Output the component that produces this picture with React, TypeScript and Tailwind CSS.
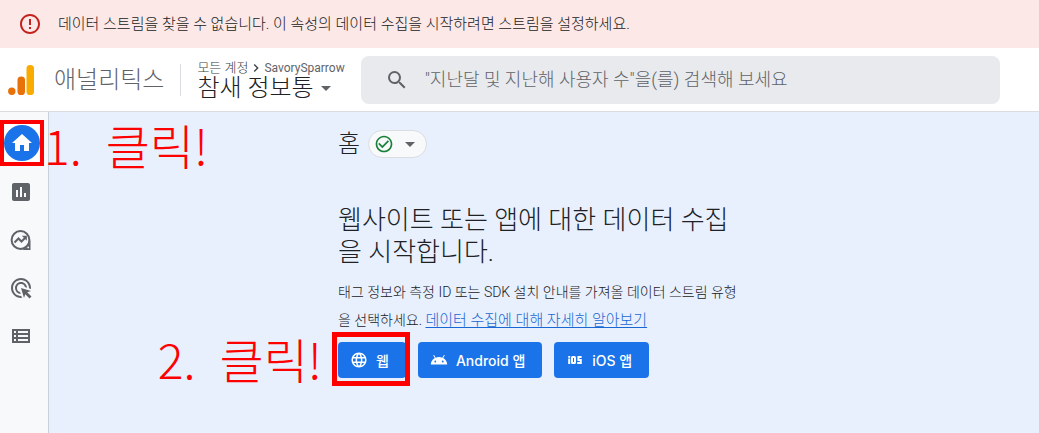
import {
  MdAdsClick,
  MdAndroid,
  MdArrowDropDown,
  MdAssessment,
  MdCheckCircleOutline,
  MdChevronRight,
  MdErrorOutline,
  MdHome,
  MdLanguage,
  MdSearch,
} from "react-icons/md";

function ExploreIcon() {
  return (
    <svg viewBox="0 0 24 24" className="w-6 h-6" fill="none" stroke="currentColor" aria-hidden="true">
      <circle cx="11.5" cy="12" r="8.9" strokeWidth="2" />
      <path d="M21.5 12v9.9h-10c4 0 8-3 10-9.9z" fill="currentColor" stroke="none" />
      <path d="M5.5 14.5l4-4 3 3 4.5-4.5" strokeWidth="2" />
      <path d="M12.8 7.8h5v5z" fill="currentColor" stroke="none" />
      <circle cx="19.2" cy="19.4" r="0.9" fill="#f8f9fa" stroke="none" />
    </svg>
  );
}

function TableIcon() {
  return (
    <svg viewBox="0 0 24 24" className="w-6 h-6" fill="currentColor" aria-hidden="true">
      <path d="M3 5h18v14H3zM5 7v2h2V7zm4 0v2h10V7zM5 11v2h2v-2zm4 0v2h10v-2zM5 15v2h2v-2zm4 0v2h10v-2z" fillRule="evenodd" />
    </svg>
  );
}

function IosIcon() {
  return (
    <svg viewBox="0 0 18 10" className="w-[18px] h-2.5" fill="none" stroke="currentColor" strokeWidth="2" aria-hidden="true">
      <path d="M3.2 3.6V9M3.2 1v1.8" />
      <rect x="6" y="2" width="3" height="6" rx="0.6" />
      <path d="M15.6 2h-3.2v3h2.4v3h-3.6" />
    </svg>
  );
}

function AnalyticsLogo() {
  return (
    <svg viewBox="0 0 26 30" className="w-[26px] h-[30px] shrink-0" aria-hidden="true">
      <rect x="18.5" y="0" width="7.5" height="30" rx="3.6" fill="#f9ab00" />
      <rect x="9.5" y="11.5" width="7.5" height="18.5" rx="3.6" fill="#e8710a" />
      <circle cx="3.8" cy="26.2" r="3.7" fill="#e8710a" />
    </svg>
  );
}

function Callout({ step }: { step: number }) {
  return (
    <p className="flex gap-6 whitespace-nowrap text-[48px] leading-none font-light text-[#ff0000] font-['Noto_Sans_CJK_KR',sans-serif]">
      <span>{step}.</span>
      <span>클릭!</span>
    </p>
  );
}

const navItems = [
  { label: "보고서", icon: <MdAssessment className="w-6 h-6" /> },
  { label: "탐색", icon: <ExploreIcon /> },
  { label: "광고", icon: <MdAdsClick className="w-6 h-6" /> },
  { label: "구성", icon: <TableIcon /> },
];

const buttonClass =
  "flex items-center gap-2 h-9 rounded bg-[#1a73e8] pl-3 pr-[17px] text-[14px] font-medium text-white whitespace-nowrap font-[Inter,'Noto_Sans_CJK_KR',sans-serif]";

export default function App() {
  return (
    <div className="min-h-screen flex flex-col bg-white text-[#202124] font-[Roboto,'Noto_Sans_CJK_KR',sans-serif]">
      {/* Alert */}
      <div className="flex items-center gap-4 h-12 px-[18px] bg-[#fce8e6]">
        <MdErrorOutline className="w-6 h-6 shrink-0 text-[#c5221f]" />
        <p className="text-[15px] font-light">
          데이터 스트림을 찾을 수 없습니다. 이 속성의 데이터 수집을 시작하려면 스트림을 설정하세요.
        </p>
      </div>

      {/* Header */}
      <header className="flex items-center h-16 pl-2 pr-[39px] border-b border-[#dadce0]">
        <AnalyticsLogo />
        <span className="ml-5 text-[24px] font-light text-[#5f6368] whitespace-nowrap">애널리틱스</span>
        <div className="ml-4 h-8 border-l border-[#dadce0]" />
        <div className="ml-4 shrink-0 whitespace-nowrap">
          <div className="flex items-center text-[13px] leading-4 font-light text-[#3c4043]">
            모든 계정
            <MdChevronRight className="w-4 h-4" />
            <span className="text-[12px] font-normal text-[#5f6368]">SavorySparrow</span>
          </div>
          <button type="button" className="flex items-center text-[24px] leading-6 font-light">
            참새 정보통
            <MdArrowDropDown className="w-6 h-6 text-[#5f6368]" />
          </button>
        </div>
        <label className="ml-4 flex flex-1 items-center gap-4 h-12 pl-6 rounded-lg bg-[#e8eaed]">
          <MdSearch className="w-6 h-6 shrink-0 text-[#5f6368]" />
          <input
            type="search"
            aria-label="검색"
            placeholder={'"지난달 및 지난해 사용자 수"을(를) 검색해 보세요'}
            className="flex-1 min-w-0 bg-transparent text-[18px] font-light outline-none placeholder:text-[#5f6368]"
          />
        </label>
      </header>

      <div className="flex flex-1">
        {/* Side navigation */}
        <nav className="flex w-[49px] shrink-0 flex-col gap-3.5 pt-2 border-r border-[#c9d0da] bg-[#f8f9fa] text-[#5f6368]">
          <div className="relative w-11">
            <button type="button" aria-label="홈" className="flex w-11 h-[46px] items-center justify-center border-4 border-[#ff0000] bg-white">
              <span className="flex w-9 h-9 shrink-0 items-center justify-center rounded-full bg-[#1a73e8] text-white">
                <MdHome className="w-6 h-6" />
              </span>
            </button>
            <div className="absolute left-full top-0 z-10">
              <Callout step={1} />
            </div>
          </div>
          <div className="flex flex-col gap-6 pl-[9px]">
            {navItems.map((item) => (
              <button key={item.label} type="button" aria-label={item.label} className="w-6 h-6">
                {item.icon}
              </button>
            ))}
          </div>
        </nav>

        {/* Home */}
        <main className="flex-1 bg-[#e8f0fe]">
          <div className="mx-auto max-w-[412px] pt-[18px]">
            <div className="flex items-center gap-2">
              <h1 className="text-[24px] leading-7 font-light">홈</h1>
              <button type="button" aria-label="데이터 상태" className="flex items-center gap-1 h-7 pl-[5px] pr-1 rounded-full border border-[#dadce0] bg-[#f8f9fa]">
                <MdCheckCircleOutline className="w-5 h-5 text-[#188038]" />
                <MdArrowDropDown className="w-6 h-6 text-[#5f6368]" />
              </button>
            </div>

            <div className="max-w-[402px]">
              <h2 className="mt-[46px] text-[26px] leading-8 font-light">웹사이트 또는 앱에 대한 데이터 수집을 시작합니다.</h2>
              <p className="mt-2.5 text-[14px] leading-7 font-light">
                태그 정보와 측정 ID 또는 SDK 설치 안내를 가져올 데이터 스트림 유형을 선택하세요.{" "}
                <a href="#" className="text-[15px] leading-5 text-[#1967d2] underline underline-offset-2">데이터 수집에 대해 자세히 알아보기</a>
              </p>
            </div>

            <div className="mt-2 flex items-center gap-3">
              <div className="relative">
                <button type="button" className={buttonClass}>
                  <MdLanguage className="w-[18px] h-[18px]" />
                  웹
                </button>
                <div className="pointer-events-none absolute -left-1.5 -right-1 -top-2.5 -bottom-2 border-5 border-[#ff0000]" />
                <div className="absolute right-full -top-2 pr-4">
                  <Callout step={2} />
                </div>
              </div>
              <button type="button" className={buttonClass}>
                <MdAndroid className="w-[18px] h-[18px]" />
                Android 앱
              </button>
              <button type="button" className={buttonClass}>
                <IosIcon />
                iOS 앱
              </button>
            </div>
          </div>
        </main>
      </div>
    </div>
  );
}
